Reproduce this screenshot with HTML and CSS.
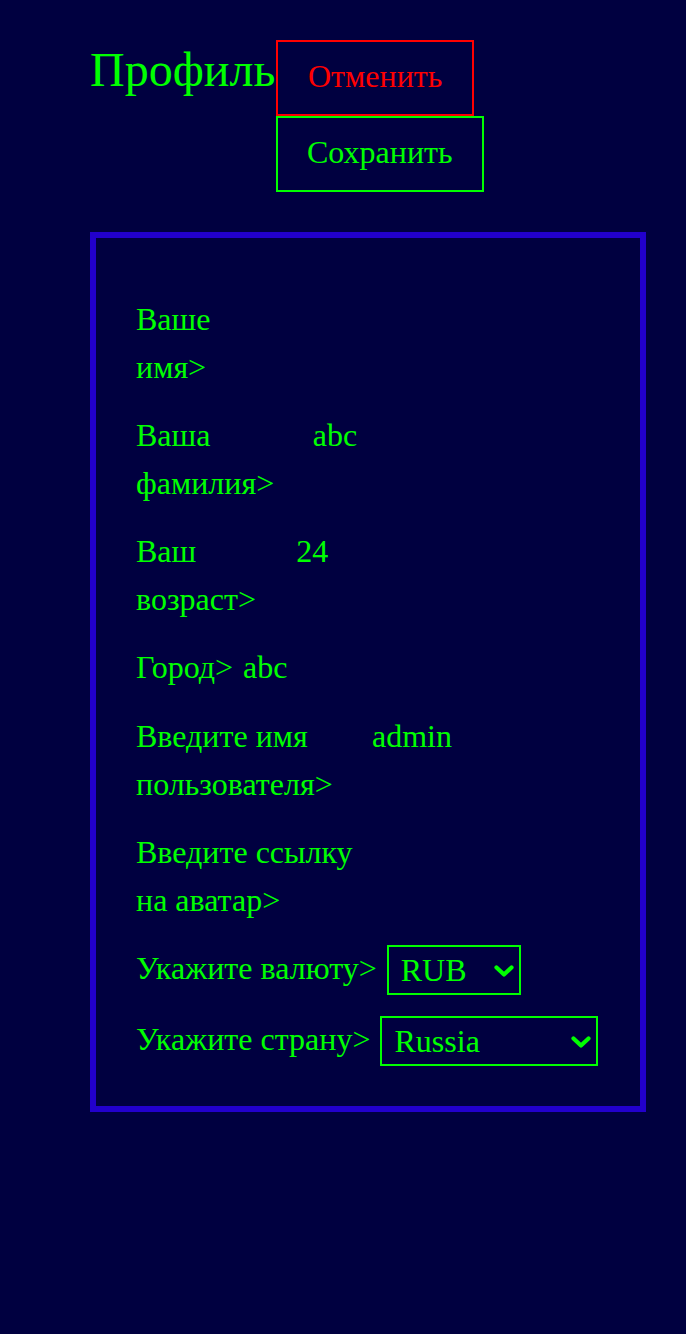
FILE: index.html
```html
<!DOCTYPE html>
<html lang="ru">
<head>
<meta charset="utf-8">
<title>Профиль</title>
<link rel="stylesheet" href="styles.css">
</head>
<body>
<div class="page">
  <header class="header">
    <h1 class="title">Профиль</h1>
    <div class="actions">
      <button class="btn btn-cancel" type="button">Отменить</button>
      <button class="btn btn-save" type="button">Сохранить</button>
    </div>
  </header>
  <form class="card">
    <div class="row">
      <label class="label" for="fname">Ваше имя&gt;</label>
      <input class="field" id="fname" type="text" value="">
    </div>
    <div class="row">
      <label class="label" for="lname">Ваша фамилия&gt;</label>
      <input class="field" id="lname" type="text" value="abc">
    </div>
    <div class="row">
      <label class="label" for="age">Ваш возраст&gt;</label>
      <input class="field" id="age" type="text" value="24">
    </div>
    <div class="row">
      <label class="label" for="city">Город&gt;</label>
      <input class="field" id="city" type="text" value="abc">
    </div>
    <div class="row">
      <label class="label" for="user">Введите имя пользователя&gt;</label>
      <input class="field" id="user" type="text" value="admin">
    </div>
    <div class="row">
      <label class="label" for="avatar">Введите ссылку на аватар&gt;</label>
      <input class="field" id="avatar" type="text" value="">
    </div>
    <div class="row row-select">
      <label class="label" for="currency">Укажите валюту&gt;</label>
      <span class="select-wrap">
        <select class="select select-currency" id="currency">
          <option>RUB</option>
        </select>
        <svg class="chevron" width="20" height="12" viewBox="0 0 20 12" aria-hidden="true"><polyline points="2.5,2.5 10,9.5 17.5,2.5" fill="none" stroke="#00ff00" stroke-width="4.2" stroke-linecap="round" stroke-linejoin="round"/></svg>
      </span>
    </div>
    <div class="row row-select">
      <label class="label" for="country">Укажите страну&gt;</label>
      <span class="select-wrap">
        <select class="select select-country" id="country">
          <option>Russia</option>
        </select>
        <svg class="chevron" width="20" height="12" viewBox="0 0 20 12" aria-hidden="true"><polyline points="2.5,2.5 10,9.5 17.5,2.5" fill="none" stroke="#00ff00" stroke-width="4.2" stroke-linecap="round" stroke-linejoin="round"/></svg>
      </span>
    </div>
  </form>
</div>
</body>
</html>
```

FILE: styles.css
```css
html, body {
  margin: 0;
  padding: 0;
  background: #000040;
}

body {
  font-family: "Liberation Serif", "Times New Roman", serif;
  color: #00ff00;
  min-height: 1334px;
}

.page {
  padding: 40px 40px 0 90px;
}

.header {
  display: flex;
  align-items: flex-start;
}

.title {
  margin: 0;
  padding-top: 2px;
  font-size: 48px;
  font-weight: normal;
  line-height: 55px;
  color: #00ff00;
  min-width: 186px;
}

.actions {
  display: flex;
  flex-direction: column;
  align-items: flex-start;
}

.btn {
  font-family: "Liberation Serif", "Times New Roman", serif;
  font-size: 32px;
  line-height: 36px;
  padding: 16px 30px 20px;
  background: transparent;
  margin: 0;
  cursor: pointer;
}

.btn-cancel {
  color: #ff0000;
  border: 2px solid #ff0000;
}

.btn-save {
  color: #00ff00;
  border: 2px solid #00ff00;
  padding-left: 29px;
  padding-right: 29px;
}

.card {
  margin-top: 40px;
  border: 6px solid #2200cc;
  padding: 57px 40px 40px 40px;
  display: flex;
  flex-direction: column;
  gap: 20px;
}

.row {
  display: flex;
  align-items: baseline;
  gap: 10px;
}

.row-select {
  align-items: flex-start;
}

.label {
  font-size: 32px;
  line-height: 48px;
}

.field {
  flex: 0 1 380px;
  min-width: 0;
  height: 48px;
  padding: 0;
  border: none;
  background: transparent;
  color: #00ff00;
  font-family: "Liberation Serif", "Times New Roman", serif;
  font-size: 32px;
  outline: none;
}

.select-wrap {
  position: relative;
  display: block;
  margin-top: 1px;
}

.select {
  -webkit-appearance: none;
  appearance: none;
  display: block;
  font-family: "Liberation Serif", "Times New Roman", serif;
  font-size: 32px;
  line-height: 46px;
  color: #00ff00;
  background: transparent;
  border: 2px solid #00ff00;
  border-radius: 0;
  height: 50px;
  padding: 0 34px 0 12px;
  margin: 0;
}

.chevron {
  position: absolute;
  right: 7px;
  top: 20px;
  pointer-events: none;
}

.select-currency {
  width: 134px;
}

.select-country {
  width: 218px;
}

.select option {
  background: #000040;
  color: #00ff00;
}
```
